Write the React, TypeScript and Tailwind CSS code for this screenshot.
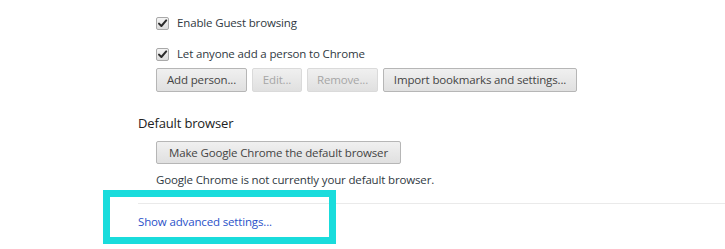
import React from "react";

function Check() {
  return (
    <span className="inline-flex w-[13px] h-[13px] rounded-[2px] border border-[#a9a9a9] bg-gradient-to-b from-[#f4f4f4] to-[#dcdcdc] items-center justify-center">
      <svg width="11" height="11" viewBox="0 0 11 11">
        <path d="M2 5.6 L4.4 8 L9.2 2.4" fill="none" stroke="#2b2b2b" strokeWidth="2" strokeLinecap="round" strokeLinejoin="round" />
      </svg>
    </span>
  );
}

function Btn({ children, disabled, w }: { children: React.ReactNode; disabled?: boolean; w: string }) {
  return (
    <div
      className={
        "h-[24px] flex items-center justify-center rounded-[2px] border bg-gradient-to-b from-[#f0f0f0] to-[#e0e0e0] " +
        w +
        (disabled ? " border-[#dadada] text-[#a6a6a6]" : " border-[#b6b6b6] text-[#444]")
      }
    >
      {children}
    </div>
  );
}

export default function App() {
  return (
    <div className="relative w-[725px] h-[249px] bg-white overflow-hidden font-['Open_Sans',sans-serif] text-[11.5px] tracking-[-0.15px] text-[#303942]">
      <div className="flex flex-col pl-[156px] pt-[16px]">
        <div className="flex items-center h-[14px] gap-[8px]">
          <Check />
          <span className="leading-[14px]">Enable Guest browsing</span>
        </div>
        <div className="flex items-center h-[14px] gap-[8px] mt-[17px]">
          <Check />
          <span className="leading-[14px]">Let anyone add a person to Chrome</span>
        </div>
        <div className="flex gap-[5px] mt-[7px]">
          <Btn w="w-[91px]">Add person...</Btn>
          <Btn w="w-[50px]" disabled>Edit...</Btn>
          <Btn w="w-[71px]" disabled>Remove...</Btn>
          <Btn w="w-[194px]">Import bookmarks and settings...</Btn>
        </div>
      </div>
      <div className="flex flex-col pl-[138px] mt-[22px]">
        <div className="text-[13px] leading-[18px] text-[#222]">Default browser</div>
        <div className="flex flex-col pl-[18px] mt-[9px] items-start">
          <div className="h-[23px] w-[245px] flex items-center justify-center rounded-[2px] border border-[#b6b6b6] bg-gradient-to-b from-[#f0f0f0] to-[#e0e0e0] text-[#444]">
            Make Google Chrome the default browser
          </div>
          <div className="mt-[8px] leading-[16px]">Google Chrome is not currently your default browser.</div>
        </div>
      </div>
      <div className="ml-[138px] mt-[15px] h-px bg-[#eaeaea]" />
      <div className="ml-[138px] mt-[10px] leading-[16px] text-[#2a52c9]">Show advanced settings...</div>
      <div className="absolute left-[103px] top-[190px] w-[233px] h-[54px] border-[7px] border-[#19dcdc]" />
    </div>
  );
}
